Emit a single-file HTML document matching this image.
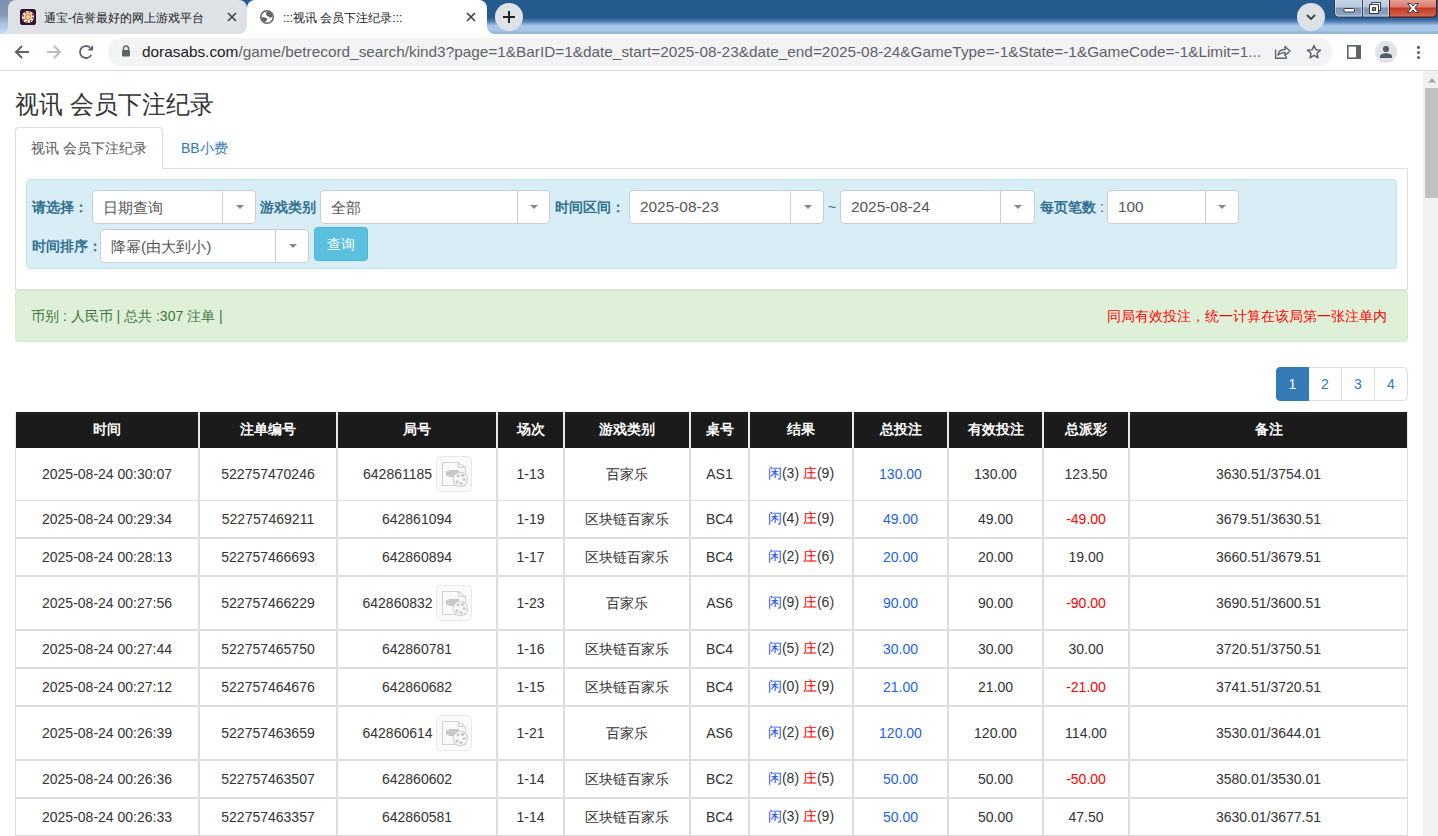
<!DOCTYPE html>
<html><head><meta charset="utf-8">
<style>
*{box-sizing:border-box;margin:0;padding:0}
html,body{width:1438px;height:836px;overflow:hidden;background:#fff;font-family:"Liberation Sans",sans-serif;font-size:14px;color:#333}
.a{position:absolute}
#strip{position:absolute;left:0;top:0;width:1438px;height:34px;background:linear-gradient(to bottom,#255a8e 0px,#265a8e 18px,#5a86b8 22px,#a6c6e9 25.5px,#a8c9ea 30px,#93b4d8 33px,#93b4d8 34px)}
#toolbar{position:absolute;left:0;top:34px;width:1438px;height:37px;background:#fff;border-bottom:1px solid #d9dbdf}
#page{position:absolute;left:0;top:71px;width:1423px;height:765px;background:#fff;overflow:hidden}
#sb{position:absolute;left:1423px;top:71px;width:15px;height:765px;background:#f1f1f1}
.tab1{left:8px;top:0;width:239px;height:34px;background:#dee1e6;border-radius:8px 8px 0 0}
.tab2{left:247px;top:0;width:240px;height:34px;background:#fff;border-radius:8px 8px 0 0}
.ttl{font-size:12px;color:#202124;white-space:nowrap}
.omni{left:108px;top:38px;width:1224px;height:28px;background:#f1f3f4;border-radius:14px}
.url{left:142px;top:43px;font-size:15.35px;color:#5f6368;white-space:nowrap;letter-spacing:0}
.url b{font-weight:normal;color:#202124}

.h3{left:15px;top:21px;font-size:24px;color:#333;white-space:nowrap;line-height:1.1;transform:scaleY(1.05);transform-origin:0 21px}
.lbl{font-weight:bold;color:#31708f;font-size:14px;white-space:nowrap}
.sel{height:34px;background:#fff;border:1px solid #ccc;border-radius:4px}
.sel .v{position:absolute;left:10px;top:7px;font-size:15.4px;color:#555;white-space:nowrap}
.sel .d{position:absolute;top:-1px;width:1px;height:34px;background:#ccc}
.sel .c{position:absolute;top:14px;width:0;height:0;border-left:4px solid transparent;border-right:4px solid transparent;border-top:4px solid #888}

table.t{position:absolute;left:15px;top:341px;border-collapse:separate;border-spacing:0;table-layout:fixed;width:1393px}
.t th{height:36px;background:linear-gradient(#151515 0,#151515 1px,#272727 1px,#222 2px,#1b1b1b 3px);color:#fff;font-weight:bold;font-size:14px;border-left:1px solid #e8e8e8;border-right:1px solid #e8e8e8;padding:0;text-align:center;vertical-align:middle}
.t td{border-left:1px solid #ddd;border-right:1px solid #ddd;border-top:1px solid #ddd;border-bottom:1px solid #ddd;padding:0;text-align:center;vertical-align:middle;color:#333;font-size:14px;white-space:nowrap}
.t tr.r1 td{border-top:none;border-bottom:none;height:52px}
.t tr.n td{height:38px}
.t tr.v td{height:54px}
.bl{color:#2150f0}.rd{color:#ff0000}.t td.am{color:#1b63e8}
.cj{position:relative;top:1px}
.nm{position:relative;top:1px;left:1px}
.vb{display:inline-block;vertical-align:middle;width:36px;height:36px;margin-left:1px}
</style></head><body>
<div id="strip">
 <div class="a" style="left:0;top:0;width:16px;height:34px;background:linear-gradient(to bottom,#7b92b0 0,#8197b3 14px,#a9c3e0 24px,#c6dcf3 34px)"></div>
 <div class="a" style="left:239px;top:26px;width:8px;height:8px;background:#fff"></div>
 <div class="a tab1" style="border-radius:8px 8px 8px 0"></div>
 <div class="a" style="left:0;top:26px;width:8px;height:8px;background:radial-gradient(circle at 0 0,transparent 7.5px,#dee1e6 8.5px)"></div>
 <div class="a tab2"></div>
 <div class="a" style="left:239px;top:26px;width:8px;height:8px;background:radial-gradient(circle at 0 0,transparent 7.5px,#fff 8.5px)"></div>
 <div class="a" style="left:487px;top:26px;width:8px;height:8px;background:radial-gradient(circle at 100% 0,transparent 7.5px,#fff 8.5px)"></div>
 <svg class="a" style="left:20px;top:9px" width="16" height="16" viewBox="0 0 16 16"><rect x="0" y="0" width="16" height="16" rx="2.5" fill="#33102c"/><circle cx="8" cy="8" r="6.1" fill="#f6f0f0"/><circle cx="8" cy="8" r="4.9" fill="none" stroke="#9a1424" stroke-width="1.5" stroke-dasharray="1.6 2.25"/><circle cx="8" cy="8" r="3.4" fill="#dba637"/><circle cx="8" cy="8" r="1.7" fill="#e6dcc8"/></svg>
 <div class="a ttl" style="left:44px;top:10px">通宝-信誉最好的网上游戏平台</div>
 <svg class="a" style="left:226px;top:11px" width="12" height="12" viewBox="0 0 12 12"><path d="M2 2L10 10M10 2L2 10" stroke="#3c4043" stroke-width="1.6"/></svg>
 <svg class="a" style="left:259px;top:9px" width="16" height="16" viewBox="0 0 16 16"><defs><clipPath id="gc"><circle cx="8" cy="8" r="5.6"/></clipPath></defs><circle cx="8" cy="8" r="7" fill="#5f6368"/><circle cx="8" cy="8" r="5.5" fill="#fff"/><g clip-path="url(#gc)" fill="#5f6368"><path d="M8.6 0C7.6 2 7 3.5 7.1 5.3C7.2 6.5 8.3 7 9.4 7.6C10.2 8.1 10.6 8.9 11.6 8.6C13 8.2 14 7.6 16 7V0Z"/><path d="M0 8.5C2 8.3 4 8.2 5.6 8.5C7 8.8 8.4 9.2 8.2 10.3C8 11.3 6.8 11.6 6.5 12.6C6.3 13.5 6.4 14.5 6.5 16H0Z"/></g></svg>
 <div class="a ttl" style="left:283px;top:10px">:::视讯 会员下注纪录:::</div>
 <svg class="a" style="left:465px;top:11px" width="12" height="12" viewBox="0 0 12 12"><path d="M2 2L10 10M10 2L2 10" stroke="#3c4043" stroke-width="1.6"/></svg>
 <div class="a" style="left:495px;top:3px;width:28px;height:28px;border-radius:50%;background:#dee1e6"></div>
 <svg class="a" style="left:501px;top:9px" width="16" height="16" viewBox="0 0 16 16"><path d="M8 2V14M2 8H14" stroke="#202124" stroke-width="2"/></svg>
 <div class="a" style="left:1297px;top:3px;width:28px;height:28px;border-radius:50%;background:#dee1e6"></div>
 <svg class="a" style="left:1305px;top:11px" width="12" height="12" viewBox="0 0 12 12"><path d="M2 4L6 8L10 4" stroke="#3c4043" stroke-width="1.8" fill="none"/></svg>
 <svg class="a" style="left:1333px;top:0" width="105" height="19" viewBox="0 0 105 19">
  <defs>
   <linearGradient id="gb" x1="0" y1="0" x2="0" y2="1"><stop offset="0" stop-color="#c8d6e6"/><stop offset="0.45" stop-color="#b4c5d9"/><stop offset="0.5" stop-color="#7b93b3"/><stop offset="1" stop-color="#98adc8"/></linearGradient>
   <linearGradient id="gr" x1="0" y1="0" x2="0" y2="1"><stop offset="0" stop-color="#e9a59a"/><stop offset="0.45" stop-color="#d77b6c"/><stop offset="0.5" stop-color="#c2391f"/><stop offset="1" stop-color="#d56a55"/></linearGradient>
  </defs>
  <path d="M1.5 -1V13A4 4 0 0 0 5.5 17H99.5A4 4 0 0 0 103.5 13V-1Z" fill="url(#gb)" stroke="#2b3a4f" stroke-width="1"/>
  <path d="M56.5 -1V17H99.5A4 4 0 0 0 103.5 13V-1Z" fill="url(#gr)" stroke="#5a1a10" stroke-width="1"/>
  <path d="M29.5 0V16.5" stroke="#2e3d52" stroke-width="1"/>
  <path d="M2.5 0V13A3 3 0 0 0 5.5 16H28.5V0M30.5 0V16H55.5V0" stroke="#e6eef7" stroke-opacity="0.55" fill="none" stroke-width="1"/>
  <rect x="11" y="8.5" width="10.5" height="3.5" rx="0.8" fill="#fff" stroke="#333a45" stroke-width="1"/>
  <path d="M38.5 2.5H47.5V10.5H45.5V4.5H38.5Z" fill="#fff" stroke="#333a45" stroke-width="1" stroke-linejoin="round"/>
  <path d="M36.5 4.5H45.5V13.5H36.5Z M39.5 7.5V10.5H42.5V7.5Z" fill="#fff" fill-rule="evenodd" stroke="#333a45" stroke-width="1"/>
  <path d="M74.5 3.5H77.8L80 6L82.2 3.5H85.5L81.8 8L85.5 12.5H82.2L80 10L77.8 12.5H74.5L78.2 8Z" fill="#fff" stroke="#3a3a46" stroke-width="1" stroke-linejoin="round"/>
 </svg>
</div>
<div id="toolbar">
 <svg class="a" style="left:14px;top:10px" width="16" height="16" viewBox="0 0 16 16"><path d="M15 8H3M8 2L2 8L8 14" stroke="#5f6368" stroke-width="2" fill="none"/></svg>
 <svg class="a" style="left:46px;top:10px" width="16" height="16" viewBox="0 0 16 16"><path d="M1 8H13M8 2L14 8L8 14" stroke="#bcbec2" stroke-width="2" fill="none"/></svg>
 <svg class="a" style="left:78px;top:10px" width="16" height="16" viewBox="0 0 16 16"><path d="M12 3.54A6 6 0 1 0 13.3 10.8" stroke="#5f6368" stroke-width="1.8" fill="none"/><path d="M9.3 6.6H15.1V0.9z" fill="#5f6368"/></svg>
 <div class="a omni" style="top:4px"></div>
 <svg class="a" style="left:121px;top:11px" width="10" height="12" viewBox="0 0 10 12"><path d="M2.5 5V3.5A2.5 2.5 0 0 1 7.5 3.5V5" stroke="#5f6368" stroke-width="1.5" fill="none"/><rect x="1" y="5" width="8" height="6.5" rx="1" fill="#5f6368"/></svg>
 <div class="a url" style="top:9px"><b>dorasabs.com</b>/game/betrecord_search/kind3?page=1&amp;BarID=1&amp;date_start=2025-08-23&amp;date_end=2025-08-24&amp;GameType=-1&amp;State=-1&amp;GameCode=-1&amp;Limit=1...</div>
 <svg class="a" style="left:1274px;top:11px" width="17" height="14" viewBox="0 0 17 14"><path d="M1.6 4.5V13.2H12.2V11" stroke="#5f6368" stroke-width="1.35" fill="none"/><path d="M4 10C4.5 6 8 4.5 11 4.5V1.5L16 6L11 10.5V7.5C8 7.5 6 8.5 4 10z" stroke="#5f6368" stroke-width="1.4" fill="none" stroke-linejoin="round"/></svg>
 <svg class="a" style="left:1306px;top:10px" width="16" height="16" viewBox="0 0 16 16"><path d="M8 1.5L9.9 5.8L14.5 6.2L11 9.3L12 13.8L8 11.4L4 13.8L5 9.3L1.5 6.2L6.1 5.8z" stroke="#5f6368" stroke-width="1.5" fill="none" stroke-linejoin="round"/></svg>
 <svg class="a" style="left:1346px;top:10px" width="16" height="16" viewBox="0 0 16 16"><rect x="1.8" y="1.8" width="12.4" height="12.4" stroke="#5f6368" stroke-width="1.6" fill="none"/><rect x="10" y="1.8" width="4.2" height="12.4" fill="#5f6368"/></svg>
 <div class="a" style="left:1375px;top:7px;width:22px;height:22px;border-radius:50%;background:#e1e3e6"></div>
 <svg class="a" style="left:1378px;top:10px" width="16" height="16" viewBox="0 0 16 16"><circle cx="8" cy="5" r="3.1" fill="#525c6c"/><path d="M2 14V12.3C2 10.3 5 9.2 8 9.2S14 10.3 14 12.3V14Z" fill="#525c6c"/></svg>
 <svg class="a" style="left:1414px;top:10px" width="8" height="16" viewBox="0 0 8 16"><circle cx="4.5" cy="3.4" r="1.6" fill="#5f6368"/><circle cx="4.5" cy="8.5" r="1.6" fill="#5f6368"/><circle cx="4.5" cy="13.5" r="1.6" fill="#5f6368"/></svg>
</div>
<div id="page">
 <div class="a h3">视讯 会员下注纪录</div>
 <div class="a" style="left:15px;top:56px;width:148px;height:42px;border:1px solid #ddd;border-bottom:none;border-radius:4px 4px 0 0;background:#fff"></div>
 <div class="a" style="left:31px;top:69px;color:#555;white-space:nowrap">视讯 会员下注纪录</div>
 <div class="a" style="left:181px;top:69px;color:#337ab7;white-space:nowrap">BB小费</div>
 <div class="a" style="left:163px;top:97px;width:1245px;height:1px;background:#ddd"></div>
 <div class="a" style="left:15px;top:98px;width:1393px;height:121px;border:1px solid #ddd;border-top:none"></div>
 <div class="a" style="left:26px;top:108px;width:1371px;height:90px;background:#d9edf7;border:1px solid #bce8f1;border-radius:4px"></div>
 <div class="a lbl" style="left:32px;top:128px">请选择：</div>
 <div class="a sel" style="left:92px;top:119px;width:164px"><span class="v">日期查询</span><span class="d" style="left:129px"></span><span class="c" style="left:143px"></span></div>
 <div class="a lbl" style="left:260px;top:128px">游戏类别</div>
 <div class="a sel" style="left:320px;top:119px;width:230px"><span class="v">全部</span><span class="d" style="left:196px"></span><span class="c" style="left:209px"></span></div>
 <div class="a lbl" style="left:555px;top:128px">时间区间：</div>
 <div class="a sel" style="left:629px;top:119px;width:195px"><span class="v">2025-08-23</span><span class="d" style="left:160px"></span><span class="c" style="left:174px"></span></div>
 <div class="a lbl" style="left:828px;top:128px;font-weight:normal">~</div>
 <div class="a sel" style="left:840px;top:119px;width:195px"><span class="v">2025-08-24</span><span class="d" style="left:159px"></span><span class="c" style="left:173px"></span></div>
 <div class="a lbl" style="left:1040px;top:128px">每页笔数<span style="font-weight:normal"> :</span></div>
 <div class="a sel" style="left:1107px;top:119px;width:132px"><span class="v">100</span><span class="d" style="left:97px"></span><span class="c" style="left:110px"></span></div>
 <div class="a lbl" style="left:32px;top:167px">时间排序：</div>
 <div class="a sel" style="left:100px;top:158px;width:209px"><span class="v">降幂(由大到小)</span><span class="d" style="left:174px"></span><span class="c" style="left:188px"></span></div>
 <div class="a" style="left:314px;top:156px;width:54px;height:34px;background:#5bc0de;border:1px solid #46b8da;border-radius:4px;color:#fff;font-size:14px;text-align:center;line-height:32px">查询</div>
 <div class="a" style="left:15px;top:219px;width:1393px;height:52px;background:#dff0d8;border:1px solid #d6e9c6;border-radius:4px"></div>
 <div class="a" style="left:31px;top:237px;color:#3c763d;white-space:nowrap">币别 : 人民币 | 总共 :307 注单 |</div>
 <div class="a" style="left:1107px;top:237px;color:#ff0000;white-space:nowrap">同局有效投注，统一计算在该局第一张注单内</div>
 <div class="a" style="left:1276px;top:296px;width:132px;height:34px">
  <div class="a" style="left:32px;top:0;width:34px;height:34px;border:1px solid #ddd;color:#337ab7;text-align:center;line-height:32px">2</div>
  <div class="a" style="left:65px;top:0;width:34px;height:34px;border:1px solid #ddd;color:#337ab7;text-align:center;line-height:32px">3</div>
  <div class="a" style="left:98px;top:0;width:34px;height:34px;border:1px solid #ddd;border-radius:0 4px 4px 0;color:#337ab7;text-align:center;line-height:32px">4</div>
  <div class="a" style="left:0;top:0;width:33px;height:34px;background:#337ab7;border:1px solid #337ab7;border-radius:4px 0 0 4px;color:#fff;text-align:center;line-height:32px">1</div>
 </div>
<table class="t"><colgroup><col style="width:184px"><col style="width:138px"><col style="width:160px"><col style="width:67px"><col style="width:126px"><col style="width:59px"><col style="width:104px"><col style="width:95px"><col style="width:95px"><col style="width:86px"><col style="width:279px"></colgroup><thead><tr><th>时间</th><th>注单编号</th><th>局号</th><th>场次</th><th>游戏类别</th><th>桌号</th><th>结果</th><th>总投注</th><th>有效投注</th><th>总派彩</th><th>备注</th></tr></thead><tbody><tr class="r1"><td>2025-08-24 00:30:07</td><td>522757470246</td><td><span class="nm">642861185</span> <svg class="vb" width="36" height="36" viewBox="0 0 36 36"><rect x="0.5" y="0.5" width="35" height="35" rx="5" fill="#fafafa" stroke="#e8e8e8"/><path d="M6.5 6.5H22.5L29.5 12V29.5H6.5Z" fill="#fafafa" stroke="#d2d2d2" stroke-width="1.1"/><path d="M22.5 6.5V11.5H29.5" fill="none" stroke="#d2d2d2" stroke-width="1.1"/><path d="M10 14.5L12.5 16V14H23V21H12.5V19L10 20.5Z" fill="#c8c8c8"/><circle cx="24.3" cy="23.4" r="7.2" fill="#fafafa" stroke="#d2d2d2" stroke-width="1.1"/><circle cx="22.1" cy="19.9" r="1.7" fill="#cacaca"/><circle cx="26.6" cy="19.4" r="1.7" fill="#cacaca"/><circle cx="28.2" cy="23.6" r="1.7" fill="#cacaca"/><circle cx="25" cy="27.6" r="1.7" fill="#cacaca"/><circle cx="21" cy="26" r="1.7" fill="#cacaca"/></svg></td><td>1-13</td><td><span class="cj">百家乐</span></td><td>AS1</td><td><span class="bl">闲</span>(3) <span class="rd">庄</span>(9)</td><td class="am">130.00</td><td>130.00</td><td>123.50</td><td>3630.51/3754.01</td></tr><tr class="n"><td>2025-08-24 00:29:34</td><td>522757469211</td><td>642861094</td><td>1-19</td><td><span class="cj">区块链百家乐</span></td><td>BC4</td><td><span class="bl">闲</span>(4) <span class="rd">庄</span>(9)</td><td class="am">49.00</td><td>49.00</td><td><span class="rd">-49.00</span></td><td>3679.51/3630.51</td></tr><tr class="n"><td>2025-08-24 00:28:13</td><td>522757466693</td><td>642860894</td><td>1-17</td><td><span class="cj">区块链百家乐</span></td><td>BC4</td><td><span class="bl">闲</span>(2) <span class="rd">庄</span>(6)</td><td class="am">20.00</td><td>20.00</td><td>19.00</td><td>3660.51/3679.51</td></tr><tr class="v"><td>2025-08-24 00:27:56</td><td>522757466229</td><td><span class="nm">642860832</span> <svg class="vb" width="36" height="36" viewBox="0 0 36 36"><rect x="0.5" y="0.5" width="35" height="35" rx="5" fill="#fafafa" stroke="#e8e8e8"/><path d="M6.5 6.5H22.5L29.5 12V29.5H6.5Z" fill="#fafafa" stroke="#d2d2d2" stroke-width="1.1"/><path d="M22.5 6.5V11.5H29.5" fill="none" stroke="#d2d2d2" stroke-width="1.1"/><path d="M10 14.5L12.5 16V14H23V21H12.5V19L10 20.5Z" fill="#c8c8c8"/><circle cx="24.3" cy="23.4" r="7.2" fill="#fafafa" stroke="#d2d2d2" stroke-width="1.1"/><circle cx="22.1" cy="19.9" r="1.7" fill="#cacaca"/><circle cx="26.6" cy="19.4" r="1.7" fill="#cacaca"/><circle cx="28.2" cy="23.6" r="1.7" fill="#cacaca"/><circle cx="25" cy="27.6" r="1.7" fill="#cacaca"/><circle cx="21" cy="26" r="1.7" fill="#cacaca"/></svg></td><td>1-23</td><td><span class="cj">百家乐</span></td><td>AS6</td><td><span class="bl">闲</span>(9) <span class="rd">庄</span>(6)</td><td class="am">90.00</td><td>90.00</td><td><span class="rd">-90.00</span></td><td>3690.51/3600.51</td></tr><tr class="n"><td>2025-08-24 00:27:44</td><td>522757465750</td><td>642860781</td><td>1-16</td><td><span class="cj">区块链百家乐</span></td><td>BC4</td><td><span class="bl">闲</span>(5) <span class="rd">庄</span>(2)</td><td class="am">30.00</td><td>30.00</td><td>30.00</td><td>3720.51/3750.51</td></tr><tr class="n"><td>2025-08-24 00:27:12</td><td>522757464676</td><td>642860682</td><td>1-15</td><td><span class="cj">区块链百家乐</span></td><td>BC4</td><td><span class="bl">闲</span>(0) <span class="rd">庄</span>(9)</td><td class="am">21.00</td><td>21.00</td><td><span class="rd">-21.00</span></td><td>3741.51/3720.51</td></tr><tr class="v"><td>2025-08-24 00:26:39</td><td>522757463659</td><td><span class="nm">642860614</span> <svg class="vb" width="36" height="36" viewBox="0 0 36 36"><rect x="0.5" y="0.5" width="35" height="35" rx="5" fill="#fafafa" stroke="#e8e8e8"/><path d="M6.5 6.5H22.5L29.5 12V29.5H6.5Z" fill="#fafafa" stroke="#d2d2d2" stroke-width="1.1"/><path d="M22.5 6.5V11.5H29.5" fill="none" stroke="#d2d2d2" stroke-width="1.1"/><path d="M10 14.5L12.5 16V14H23V21H12.5V19L10 20.5Z" fill="#c8c8c8"/><circle cx="24.3" cy="23.4" r="7.2" fill="#fafafa" stroke="#d2d2d2" stroke-width="1.1"/><circle cx="22.1" cy="19.9" r="1.7" fill="#cacaca"/><circle cx="26.6" cy="19.4" r="1.7" fill="#cacaca"/><circle cx="28.2" cy="23.6" r="1.7" fill="#cacaca"/><circle cx="25" cy="27.6" r="1.7" fill="#cacaca"/><circle cx="21" cy="26" r="1.7" fill="#cacaca"/></svg></td><td>1-21</td><td><span class="cj">百家乐</span></td><td>AS6</td><td><span class="bl">闲</span>(2) <span class="rd">庄</span>(6)</td><td class="am">120.00</td><td>120.00</td><td>114.00</td><td>3530.01/3644.01</td></tr><tr class="n"><td>2025-08-24 00:26:36</td><td>522757463507</td><td>642860602</td><td>1-14</td><td><span class="cj">区块链百家乐</span></td><td>BC2</td><td><span class="bl">闲</span>(8) <span class="rd">庄</span>(5)</td><td class="am">50.00</td><td>50.00</td><td><span class="rd">-50.00</span></td><td>3580.01/3530.01</td></tr><tr class="n"><td>2025-08-24 00:26:33</td><td>522757463357</td><td>642860581</td><td>1-14</td><td><span class="cj">区块链百家乐</span></td><td>BC4</td><td><span class="bl">闲</span>(3) <span class="rd">庄</span>(9)</td><td class="am">50.00</td><td>50.00</td><td>47.50</td><td>3630.01/3677.51</td></tr></tbody></table>
</div>
<div id="sb">
 <svg class="a" style="left:5px;top:7px" width="8" height="5" viewBox="0 0 8 5"><path d="M0 4.5L4 0.3L8 4.5z" fill="#a3a3a3"/></svg>
 <div class="a" style="left:2px;top:17px;width:13px;height:110px;background:#c1c1c1"></div>
</div>
</body></html>
